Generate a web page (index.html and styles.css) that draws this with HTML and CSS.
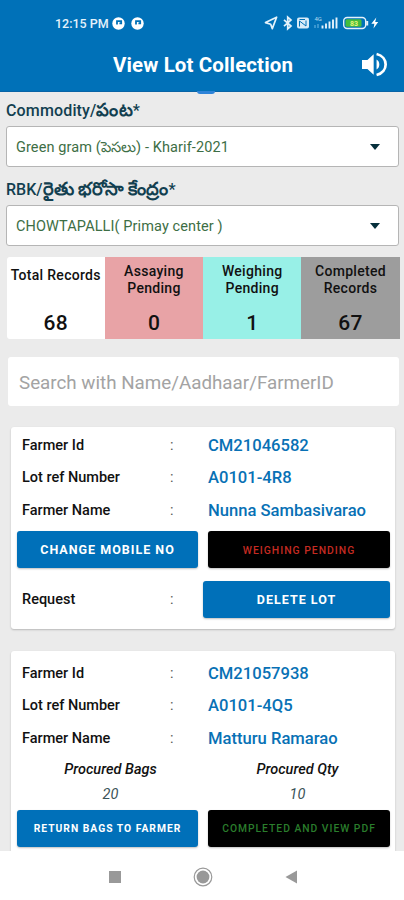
FILE: index.html
```html
<!DOCTYPE html>
<html lang="en">
<head>
    <meta charset="UTF-8">
    <meta name="viewport" content="width=device-width, initial-scale=1.0">
    <title>View Lot Collection</title>
    <link rel="stylesheet" href="styles.css">
</head>
<body>
    <header class="app-header">
        <div class="status-bar">
            <div class="status-left">
                <span class="clock">12:15 PM</span>
                <svg class="app-dot" viewBox="0 0 13 13"><circle cx="6.5" cy="6.5" r="6.2" fill="#fff"/><path d="M5 7.5V4.2h4.2v2.2H7.4" fill="none" stroke="#0071b8" stroke-width="1.8"/></svg>
                <svg class="app-dot" viewBox="0 0 13 13"><circle cx="6.5" cy="6.5" r="6.2" fill="#fff"/><path d="M5 7.5V4.2h4.2v2.2H7.4" fill="none" stroke="#0071b8" stroke-width="1.8"/></svg>
            </div>
            <!-- location, bluetooth, nfc, signal, battery, charging -->
            <svg class="status-icons" viewBox="0 0 116 16">
                <path d="M1.5 7.6 12.6 2.2 8.3 13.6 6.7 9.2z" fill="none" stroke="#e4f2fb" stroke-width="1.7" stroke-linejoin="round"/>
                <path d="M20 4.8 27 11 23.7 13.8V2.2L27 5 20 11.2" fill="none" stroke="#e4f2fb" stroke-width="1.7"/>
                <rect x="33" y="2.5" width="12" height="11" rx="2" fill="#d9ecf8"/>
                <path d="M35.5 11.5V6l6.5 5V5.5M35.5 4.5h5.5" fill="none" stroke="#0071b8" stroke-width="1"/>
                <text x="50.5" y="6.4" class="net-label">4G</text>
                <path d="M51 10v3M54 9v4" stroke="#5eb0df" stroke-width="1.2"/>
                <path d="M58.5 10.5v3M62 8.5v5M65.5 6.5v7M69 4.5v9M72.5 2.5v11" stroke="#e4f2fb" stroke-width="1.9"/>
                <rect x="79.7" y="2.5" width="22" height="11" rx="3.5" fill="none" stroke="#e4f2fb" stroke-width="1.4"/>
                <rect x="81.5" y="4.3" width="16" height="7.4" rx="1.5" fill="#43bd3c"/>
                <path d="M103.2 6v4.5" stroke="#e4f2fb" stroke-width="2"/>
                <text x="86" y="10.6" class="battery-label">83</text>
                <path d="M112.3 2.6 107.3 8.8h3.1l-.9 4.8 4.7-6.6h-3z" fill="#fff"/>
            </svg>
        </div>
        <div class="title-bar">
            <h1>View Lot Collection</h1>
            <svg class="speaker" viewBox="0 0 24 24"><path d="M0 7.6v8.8h5.2l6 5.4V2.2l-6 5.4z" fill="#fff"/><path d="M14 7.2v9.6c3.5-1.8 3.5-7.8 0-9.6z" fill="#fff"/><path d="M14 1.9c11.6 3 11.6 17.2 0 20.2" fill="none" stroke="#fff" stroke-width="2.6"/></svg>
        </div>
        <span class="header-mark"></span>
    </header>

    <main class="content">
        <div class="field-label commodity-label">Commodity/<span>పంట</span>*</div>
        <div class="select-box">
            <span class="select-text commodity">Green gram (పెసలు) - Kharif-2021</span>
            <span class="arrow"></span>
        </div>
        <div class="field-label">RBK/<span>రైతు భరోసా కేంద్రం</span>*</div>
        <div class="select-box">
            <span class="select-text">CHOWTAPALLI( Primay center )</span>
            <span class="arrow"></span>
        </div>

        <div class="stats">
            <div class="stat total"><span class="stat-name">Total Records</span><b>68</b></div>
            <div class="stat assaying"><span class="stat-name">Assaying<br>Pending</span><b>0</b></div>
            <div class="stat weighing"><span class="stat-name">Weighing<br>Pending</span><b>1</b></div>
            <div class="stat completed"><span class="stat-name">Completed<br>Records</span><b>67</b></div>
        </div>

        <input type="text" class="search" placeholder="Search with Name/Aadhaar/FarmerID">

        <section class="card">
            <div class="row"><span>Farmer Id</span><i>:</i><strong>CM21046582</strong></div>
            <div class="row"><span>Lot ref Number</span><i>:</i><strong>A0101-4R8</strong></div>
            <div class="row"><span>Farmer Name</span><i>:</i><strong>Nunna Sambasivarao</strong></div>
            <div class="buttons">
                <button class="btn change">CHANGE MOBILE NO</button>
                <button class="btn dark pending">WEIGHING PENDING</button>
            </div>
            <div class="row request">
                <span>Request</span><i>:</i>
                <button class="btn delete">DELETE LOT</button>
            </div>
        </section>

        <section class="card lot-done">
            <div class="row"><span>Farmer Id</span><i>:</i><strong>CM21057938</strong></div>
            <div class="row"><span>Lot ref Number</span><i>:</i><strong>A0101-4Q5</strong></div>
            <div class="row"><span>Farmer Name</span><i>:</i><strong>Matturu Ramarao</strong></div>
            <div class="procured">
                <div><em>Procured Bags</em><em class="amount">20</em></div>
                <div><em>Procured Qty</em><em class="amount">10</em></div>
            </div>
            <div class="buttons">
                <button class="btn return">RETURN BAGS TO FARMER</button>
                <button class="btn dark done">COMPLETED AND VIEW PDF</button>
            </div>
        </section>
    </main>

    <nav class="nav-bar">
        <svg viewBox="0 0 20 20"><rect x="4" y="4" width="12" height="12" fill="#999"/></svg>
        <svg viewBox="0 0 20 20"><circle cx="10" cy="10" r="8.8" fill="none" stroke="#999" stroke-width="1.2"/><circle cx="10" cy="10" r="6.4" fill="#999"/></svg>
        <svg viewBox="0 0 20 20"><path d="M4.5 10 16 3.5v13z" fill="#999"/></svg>
    </nav>
</body>
</html>
```
FILE: styles.css
```css
* {
    margin: 0;
    padding: 0;
    box-sizing: border-box;
    font-family: Roboto, 'Noto Sans', 'Liberation Sans', sans-serif;
}

body {
    height: 900px;
    display: flex;
    flex-direction: column;
    background-color: #ebebeb;
    overflow: hidden;
}

.app-header {
    position: relative;
    flex: none;
    height: 92px;
    background-color: #0071b8;
    border-bottom: 1px solid #0864a6;
    color: white;
}

.status-bar {
    display: flex;
    justify-content: space-between;
    padding: 15px 24px 0 55px;
    height: 40px;
}

.status-left {
    display: flex;
    align-items: center;
    height: 16px;
}

.clock {
    width: 57px;
    font-size: 12.5px;
    font-weight: 500;
    white-space: nowrap;
    color: #e4f2fb;
}

.app-dot {
    width: 13px;
    height: 13px;
    margin-right: 6px;
}

.status-icons {
    width: 116px;
    height: 16px;
}

.net-label {
    font-size: 6px;
    fill: #b5dbf0;
}

.battery-label {
    font-size: 7px;
    font-weight: 700;
    fill: #e6f57a;
}

.title-bar {
    display: flex;
    align-items: center;
    justify-content: space-between;
    height: 48px;
    padding: 0 17px 0 113px;
}

.title-bar h1 {
    padding-top: 1px;
    font-size: 20.5px;
    font-weight: 700;
    letter-spacing: 0.12px;
    white-space: nowrap;
}

.speaker {
    width: 25px;
    height: 25px;
}

.header-mark {
    position: absolute;
    left: 197px;
    bottom: -3px;
    width: 18px;
    height: 3px;
    border-radius: 0 0 3px 3px;
    background-color: #2d83d8;
}

.content {
    flex: 1;
    min-height: 0;
    overflow: hidden;
    padding: 0 5px 0 6px;
}

.field-label {
    height: 38px;
    padding-top: 10px;
    line-height: 26px;
    font-size: 16px;
    font-weight: 500;
    color: #123f50;
    white-space: nowrap;
}

.field-label span {
    font-size: 18px;
    font-weight: 700;
    line-height: 20px;
}

.field-label.commodity-label {
    height: 34px;
    padding-top: 6px;
    letter-spacing: 0.15px;
}

.select-box {
    display: flex;
    align-items: center;
    justify-content: space-between;
    width: 393px;
    height: 41px;
    padding: 1px 18px 0 9px;
    border: 1px solid #b5b5b5;
    border-radius: 3px;
    background-color: white;
}

.select-text {
    font-size: 14.5px;
    letter-spacing: 0.1px;
    color: #3d6e45;
    white-space: nowrap;
}

/* the Telugu glyphs push the line up a little */
.select-text.commodity {
    padding-top: 4px;
}

.arrow {
    border: 5.5px solid transparent;
    border-top: 6px solid #06303c;
    border-bottom: none;
}

.stats {
    display: grid;
    grid-template-columns: repeat(4, 1fr);
    width: 393px;
    height: 82px;
    margin: 11px 0 0 0.6px;
}

.stat {
    display: flex;
    flex-direction: column;
    align-items: center;
    justify-content: space-between;
    padding: 6px 0 3px;
    text-align: center;
    color: #111;
}

.stat-name {
    font-size: 14px;
    line-height: 17px;
    font-weight: 500;
    letter-spacing: 0.3px;
    white-space: nowrap;
}

.stat b {
    font-size: 21px;
    line-height: 26px;
    font-weight: 500;
    letter-spacing: 0.2px;
}

.total {
    padding-top: 10px;
    border-radius: 3px 0 0 3px;
    background-color: white;
}

.assaying {
    background-color: #e8a3a6;
}

.weighing {
    background-color: #98f0e7;
}

.completed {
    background-color: #9d9d9d;
}

.search {
    display: block;
    width: 391px;
    height: 49px;
    margin: 18px 0 0 2px;
    padding: 2px 11px 0;
    border: none;
    border-radius: 3px;
    outline: none;
    font-size: 18.8px;
    background-color: white;
}

.search::placeholder {
    color: #a3a3a3;
}

.card {
    width: 384px;
    height: 202px;
    margin: 21px 0 0 5px;
    padding: 2px 5px 0 6px;
    border-radius: 3px;
    background-color: white;
    box-shadow: 0 1px 2px rgba(0, 0, 0, 0.22);
}

.card.lot-done {
    height: 240px;
    margin-top: 22px;
    padding-top: 6px;
}

.row {
    display: grid;
    grid-template-columns: 153px 38px 1fr;
    align-items: center;
    height: 32.5px;
    padding-left: 5px;
    font-size: 14.5px;
    color: #111;
    white-space: nowrap;
}

.row span {
    font-weight: 500;
}

.row i {
    font-style: normal;
    color: #555;
    text-indent: -5px;
}

.row strong {
    margin-left: -5px;
    font-size: 16.6px;
    font-weight: 500;
    color: #0871b5;
}

.buttons {
    display: grid;
    grid-template-columns: 181px 182px;
    gap: 10px;
    margin-top: 4.5px;
}

.lot-done .buttons {
    margin-top: 0;
}

.btn {
    height: 37px;
    border: none;
    border-radius: 3px;
    background-color: #0070b9;
    box-shadow: 0 1px 2px rgba(0, 0, 0, 0.25);
    color: white;
    font-size: 12.5px;
    font-weight: 700;
    letter-spacing: 1px;
    white-space: nowrap;
}

.btn.dark {
    background-color: black;
    font-weight: 500;
}

.btn.pending {
    padding-top: 2px;
    color: #c52b22;
    font-size: 10.4px;
}

.btn.done {
    padding-top: 1px;
    color: #2a7d2c;
    font-size: 10.3px;
}

.btn.return {
    padding-top: 1px;
    font-size: 10.3px;
}

.row.request {
    height: 63px;
    grid-template-columns: 153px 28px 187px;
}

.procured {
    display: grid;
    grid-template-columns: 187px 187px;
    height: 55px;
    text-align: center;
}

.procured em {
    display: block;
    height: 25px;
    line-height: 29px;
    font-size: 14.5px;
    font-weight: 500;
    color: #111;
}

.procured em.amount {
    font-weight: 400;
    color: #3b5358;
}

.nav-bar {
    flex: none;
    display: flex;
    align-items: center;
    justify-content: center;
    gap: 68px;
    height: 49px;
    padding: 2px 0 0 1px;
    background-color: white;
}

.nav-bar svg {
    width: 20px;
    height: 20px;
}
```
